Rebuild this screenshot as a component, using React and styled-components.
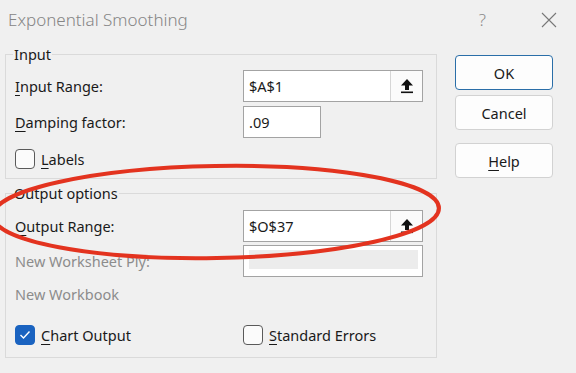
import React from "react";
import styled, { createGlobalStyle } from "styled-components";

const GlobalStyle = createGlobalStyle`
    html, body {
        margin: 0;
        padding: 0;
        background: #f0f0f0;
    }
    body {
        font-family: "Noto Sans", "Open Sans", sans-serif;
    }
`;

function UpArrow() {
    return (
        <svg width="14" height="16" viewBox="0 0 14 16">
            <path d="M7 1 L13 7.5 L9 7.5 L9 12 L5 12 L5 7.5 L1 7.5 Z" fill="#111" />
            <rect x="1" y="13.5" width="12" height="1.6" fill="#111" />
        </svg>
    );
}

function RangeField({ value }) {
    return (
        <Field width="180px">
            <FieldText>{value}</FieldText>
            <PickButton>
                <UpArrow />
            </PickButton>
        </Field>
    );
}

function Check({ checked, children, u }) {
    return (
        <CheckRow>
            <Box checked={checked}>
                {checked && (
                    <svg width="12" height="10" viewBox="0 0 12 10">
                        <path d="M1.5 5 L4.5 8 L10.5 1.5" stroke="#fff" strokeWidth="1.4" fill="none" />
                    </svg>
                )}
            </Box>
            <span>
                <U>{u}</U>
                {children}
            </span>
        </CheckRow>
    );
}

export default function App() {
    return (
        <Dialog>
            <GlobalStyle />
            <TitleBar>
                <Title>Exponential Smoothing</Title>
                <TitleIcons>
                    <Question>?</Question>
                    <svg width="16" height="16" viewBox="0 0 16 16">
                        <path d="M1 1 L15 15 M15 1 L1 15" stroke="#777" strokeWidth="1.1" />
                    </svg>
                </TitleIcons>
            </TitleBar>
            <Body>
                <Groups>
                    <Group>
                        <Legend>Input</Legend>
                        <FormGrid>
                            <Label>
                                <U>I</U>nput Range:
                            </Label>
                            <RangeField value="$A$1" />
                            <Label>
                                <U>D</U>amping factor:
                            </Label>
                            <Field width="78px">
                                <FieldText>.09</FieldText>
                            </Field>
                        </FormGrid>
                        <LabelsRow>
                            <Check u="L">abels</Check>
                        </LabelsRow>
                    </Group>
                    <OutputGroup>
                        <Legend>Output options</Legend>
                        <OutputGrid>
                            <Label>
                                <U>O</U>utput Range:
                            </Label>
                            <RangeField value="$O$37" />
                            <Label disabled>New Worksheet Ply:</Label>
                            <Field width="180px" disabled>
                                <DisabledFill />
                            </Field>
                        </OutputGrid>
                        <WorkbookRow>New Workbook</WorkbookRow>
                        <CheckLine>
                            <Check checked u="C">
                                hart Output
                            </Check>
                            <Check u="S">tandard Errors</Check>
                        </CheckLine>
                    </OutputGroup>
                </Groups>
                <Buttons>
                    <Button primary>OK</Button>
                    <Button>Cancel</Button>
                    <HelpButton>
                        <U>H</U>elp
                    </HelpButton>
                </Buttons>
            </Body>
            <Annotation width="576" height="373" viewBox="0 0 576 373">
                <ellipse
                    cx="216"
                    cy="212"
                    rx="223"
                    ry="46"
                    fill="none"
                    stroke="#e3331f"
                    strokeWidth="4"
                    transform="rotate(-1 216 212)"
                />
            </Annotation>
        </Dialog>
    );
}

const Dialog = styled.div`
    position: relative;
    width: 576px;
    height: 373px;
    background: #f0f0f0;
    color: #1a1a1a;
    overflow: hidden;
`;

const TitleBar = styled.div`
    height: 44px;
    display: flex;
    align-items: center;
    justify-content: space-between;
    padding: 0 19px 0 8px;
`;

const Title = styled.span`
    font-size: 17px;
    font-weight: 300;
    color: #858585;
    margin-top: -5px;
`;

const TitleIcons = styled.div`
    display: flex;
    align-items: center;
    gap: 55px;
    margin-top: -5px;
`;

const Question = styled.span`
    font-size: 17px;
    font-weight: 300;
    color: #8a8a8a;
`;

const Body = styled.div`
    display: flex;
    padding-left: 5px;
`;

const Groups = styled.div`
    width: 432px;
    display: flex;
    flex-direction: column;
    gap: 4px;
`;

const Group = styled.fieldset`
    margin: 0;
    padding: 6px 0 9px 9px;
    border: 1px solid #dadada;
    min-width: 0;
`;

const OutputGroup = styled(Group)`
    padding-top: 7px;
    padding-bottom: 12px;
`;

const Legend = styled.legend`
    font-size: 14.5px;
    line-height: 20px;
    padding: 0 1px;
    margin-left: -2px;
`;

const FormGrid = styled.div`
    display: grid;
    grid-template-columns: 228px auto;
    row-gap: 4px;
    align-items: center;
`;

const OutputGrid = styled(FormGrid)`
    row-gap: 3px;
`;

const Label = styled.span`
    font-size: 14.5px;
    color: ${(p) => (p.disabled ? "#8c8c8c" : "#1a1a1a")};
`;

const U = styled.span`
    text-decoration: underline;
    text-underline-offset: 3px;
    text-decoration-thickness: 1px;
`;

const Field = styled.div`
    width: ${(p) => p.width};
    height: 32px;
    box-sizing: border-box;
    border: 1px solid #a3a3a3;
    background: #fff;
    display: flex;
    align-items: stretch;
    padding: ${(p) => (p.disabled ? "4px 4px 7px 5px" : "0")};
`;

const FieldText = styled.span`
    flex: 1;
    display: flex;
    align-items: center;
    padding-left: 5px;
    font-size: 14.5px;
`;

const PickButton = styled.span`
    width: 31px;
    display: flex;
    align-items: center;
    justify-content: center;
    border-left: 1px solid #d6d6d6;
    background: #fbfbfb;
`;

const DisabledFill = styled.div`
    flex: 1;
    background: #ececec;
`;

const LabelsRow = styled.div`
    margin-top: 11px;
`;

const CheckRow = styled.label`
    display: flex;
    align-items: center;
    gap: 6px;
    font-size: 14.5px;
    height: 20px;
`;

const Box = styled.span`
    width: 20px;
    height: 20px;
    box-sizing: border-box;
    border-radius: 4px;
    border: 1px solid ${(p) => (p.checked ? "#1a63c0" : "#5a5a5a")};
    background: ${(p) => (p.checked ? "#1a63c0" : "#fbfbfb")};
    display: flex;
    align-items: center;
    justify-content: center;
`;

const WorkbookRow = styled.div`
    font-size: 14.5px;
    color: #8c8c8c;
    height: 20px;
    line-height: 20px;
    margin-top: 7px;
`;

const CheckLine = styled.div`
    display: grid;
    grid-template-columns: 228px auto;
    margin-top: 21px;
`;

const Buttons = styled.div`
    margin-left: 18px;
    padding-top: 11px;
    display: flex;
    flex-direction: column;
    gap: 5px;
    width: 98px;
`;

const Button = styled.button`
    height: 35px;
    box-sizing: border-box;
    border-radius: 4px;
    border: 1px solid ${(p) => (p.primary ? "#2a6ea8" : "#d2d2d2")};
    background: #fdfdfd;
    font-family: "Noto Sans", "Open Sans", sans-serif;
    font-size: 14.5px;
    color: #1a1a1a;
    padding: 0;
`;

const HelpButton = styled(Button)`
    margin-top: 8px;
`;

const Annotation = styled.svg`
    position: absolute;
    left: 0;
    top: 0;
    pointer-events: none;
`;
